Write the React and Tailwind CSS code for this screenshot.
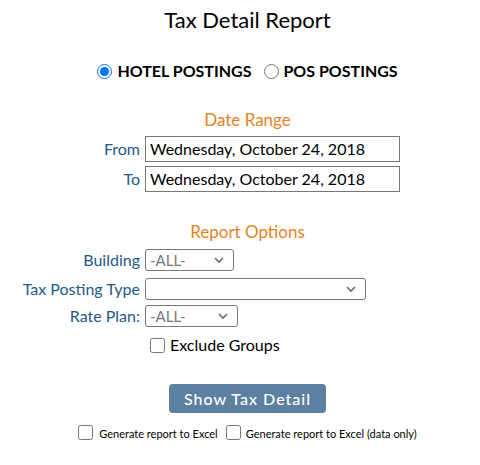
import React from 'react';

const font = { fontFamily: 'Lato, "Open Sans", sans-serif' };

const Chevron = () => (
  <svg width="12" height="8" viewBox="0 0 12 8" className="pointer-events-none absolute right-[8px] top-1/2 -translate-y-1/2">
    <path d="M2 2l4 4 4-4" fill="none" stroke="#6b6b6b" strokeWidth="1.6" />
  </svg>
);

const Select = ({ width, value }) => (
  <div className={`relative h-[22px] ${width} rounded-[3px] border border-[#777] bg-white`}>
    <span className="absolute left-[4px] top-1/2 -translate-y-1/2 text-[15px] leading-none text-[#777]">{value}</span>
    <Chevron />
  </div>
);

const Row = ({ label, children, className = '' }) => (
  <div className={`flex items-center ${className}`}>
    <div className="w-[141px] pr-[1px] text-right text-[16px] leading-[22px] text-[#265987]">{label}</div>
    <div className="pl-[4px]">{children}</div>
  </div>
);

export default function App() {
  return (
    <div className="min-h-[465px] w-[480px] bg-white" style={font}>
      <div className="pl-[15px] pt-[5px] text-center">
        <h1 className="text-[22px] leading-[30px] text-black">Tax Detail Report</h1>
        <div className="mt-[24px] flex items-center justify-center text-[16px] font-bold text-black">
          <label className="flex items-center">
            <input type="radio" name="postings" defaultChecked className="m-0 h-[15px] w-[15px]" />
            <span className="ml-[5px]">HOTEL POSTINGS</span>
          </label>
          <label className="ml-[13px] flex items-center">
            <input type="radio" name="postings" className="m-0 h-[15px] w-[15px]" />
            <span className="ml-[4px]">POS POSTINGS</span>
          </label>
        </div>
        <div className="mt-[25px] text-[17px] leading-[24px] text-[#e8821f]">Date Range</div>
      </div>

      <Row label="From" className="mt-[4px]">
        <div className="flex h-[26px] w-[255px] items-center border border-[#777] px-[4px] text-[16px] text-black">
          Wednesday, October 24, 2018
        </div>
      </Row>
      <Row label="To" className="mt-[4px]">
        <div className="flex h-[26px] w-[255px] items-center border border-[#777] px-[4px] text-[16px] text-black">
          Wednesday, October 24, 2018
        </div>
      </Row>

      <div className="mt-[28px] pl-[15px] text-center text-[17px] leading-[24px] text-[#e8821f]">Report Options</div>

      <Row label="Building" className="mt-[5px]">
        <Select width="w-[89px]" value="-ALL-" />
      </Row>
      <Row label="Tax Posting Type" className="mt-[7px]">
        <Select width="w-[221px]" value="" />
      </Row>
      <Row label="Rate Plan:" className="mt-[5px]">
        <Select width="w-[93px]" value="-ALL-" />
      </Row>
      <div className="mt-[6px] flex items-center pl-[150px] text-[16px] leading-[24px] text-black">
        <input type="checkbox" className="m-0 h-[15px] w-[15px]" />
        <span className="ml-[5px]">Exclude Groups</span>
      </div>

      <div className="pl-[15px]">
        <div className="mt-[27px] flex justify-center">
          <button className="h-[29px] w-[157px] rounded-[4px] bg-[#5d80a0] text-[16px] font-medium tracking-[1px] text-white">
            Show Tax Detail
          </button>
        </div>
        <div className="mt-[9px] flex items-center justify-center text-[11px] leading-[16px] text-black">
          <label className="flex items-center">
            <input type="checkbox" className="m-0 h-[15px] w-[15px]" />
            <span className="ml-[6px] mt-[4px]">Generate report to Excel</span>
          </label>
          <label className="ml-[8px] flex items-center">
            <input type="checkbox" className="m-0 h-[15px] w-[15px]" />
            <span className="ml-[5px] mt-[4px]">Generate report to Excel (data only)</span>
          </label>
        </div>
      </div>
    </div>
  );
}
